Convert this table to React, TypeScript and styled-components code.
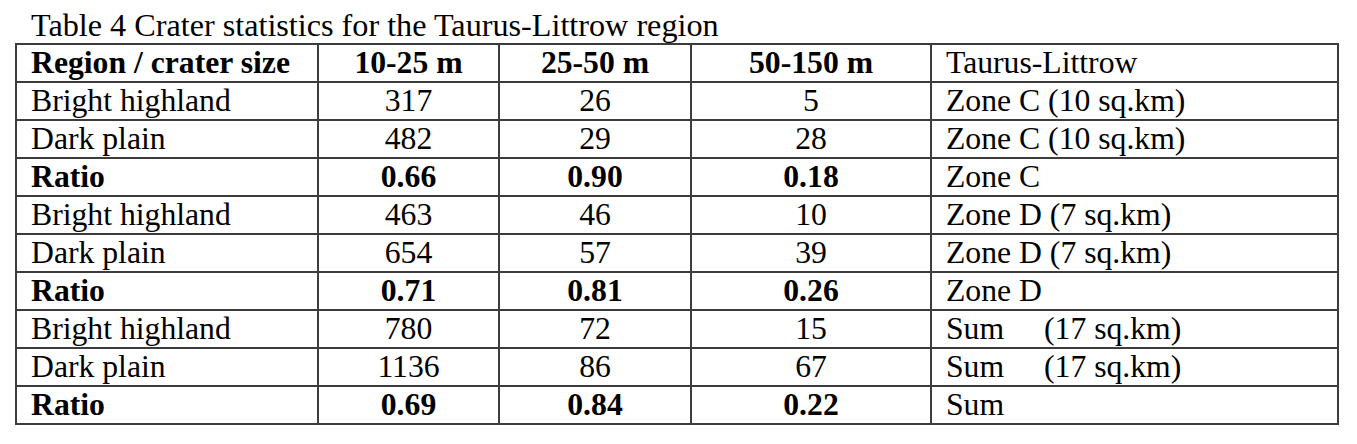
import React from 'react';
import styled, { createGlobalStyle } from 'styled-components';

const GlobalStyle = createGlobalStyle`
    html, body {
        margin: 0;
        padding: 0;
        background: #ffffff;
    }
    body {
        font-family: "Liberation Serif", "Times New Roman", serif;
        color: #000000;
    }
`;

const Page = styled.div`
    padding: 7px 0 0 15px;
`;

const Caption = styled.div`
    font-size: 32.2px;
    line-height: 36px;
    padding-left: 16px;
    white-space: nowrap;
`;

const Table = styled.table`
    border-collapse: collapse;
    table-layout: fixed;
    width: 1322px;
    font-size: 31.7px;
    line-height: 36px;
`;

const Cell = styled.td<{ bold?: boolean; align?: 'left' | 'center' }>`
    border: 2px solid #3c3c3c;
    padding: 0 14px;
    height: 36px;
    white-space: nowrap;
    text-align: ${({ align }) => align ?? 'center'};
    font-weight: ${({ bold }) => (bold ? 700 : 400)};
`;

const SumLabel = styled.span`
    display: inline-block;
    width: 98px;
`;

type Row = {
    label: string;
    values: [string, string, string];
    zone: React.ReactNode;
    bold?: boolean;
};

const sum = (area?: string) => (
    <>
        <SumLabel>Sum</SumLabel>
        {area}
    </>
);

const rows: Row[] = [
    { label: 'Bright highland', values: ['317', '26', '5'], zone: 'Zone C (10 sq.km)' },
    { label: 'Dark plain', values: ['482', '29', '28'], zone: 'Zone C (10 sq.km)' },
    { label: 'Ratio', values: ['0.66', '0.90', '0.18'], zone: 'Zone C', bold: true },
    { label: 'Bright highland', values: ['463', '46', '10'], zone: 'Zone D (7 sq.km)' },
    { label: 'Dark plain', values: ['654', '57', '39'], zone: 'Zone D (7 sq.km)' },
    { label: 'Ratio', values: ['0.71', '0.81', '0.26'], zone: 'Zone D', bold: true },
    { label: 'Bright highland', values: ['780', '72', '15'], zone: sum('(17 sq.km)') },
    { label: 'Dark plain', values: ['1136', '86', '67'], zone: sum('(17 sq.km)') },
    { label: 'Ratio', values: ['0.69', '0.84', '0.22'], zone: sum(), bold: true },
];

export default function App() {
    return (
        <Page>
            <GlobalStyle />
            <Caption>Table 4 Crater statistics for the Taurus-Littrow region</Caption>
            <Table>
                <colgroup>
                    <col style={{ width: 302 }} />
                    <col style={{ width: 181 }} />
                    <col style={{ width: 192 }} />
                    <col style={{ width: 240 }} />
                    <col style={{ width: 407 }} />
                </colgroup>
                <tbody>
                    <tr>
                        <Cell bold align="left">Region / crater size</Cell>
                        <Cell bold>10-25 m</Cell>
                        <Cell bold>25-50 m</Cell>
                        <Cell bold>50-150 m</Cell>
                        <Cell align="left">Taurus-Littrow</Cell>
                    </tr>
                    {rows.map((row, i) => (
                        <tr key={i}>
                            <Cell bold={row.bold} align="left">{row.label}</Cell>
                            {row.values.map((v, j) => (
                                <Cell key={j} bold={row.bold}>{v}</Cell>
                            ))}
                            <Cell align="left">{row.zone}</Cell>
                        </tr>
                    ))}
                </tbody>
            </Table>
        </Page>
    );
}
